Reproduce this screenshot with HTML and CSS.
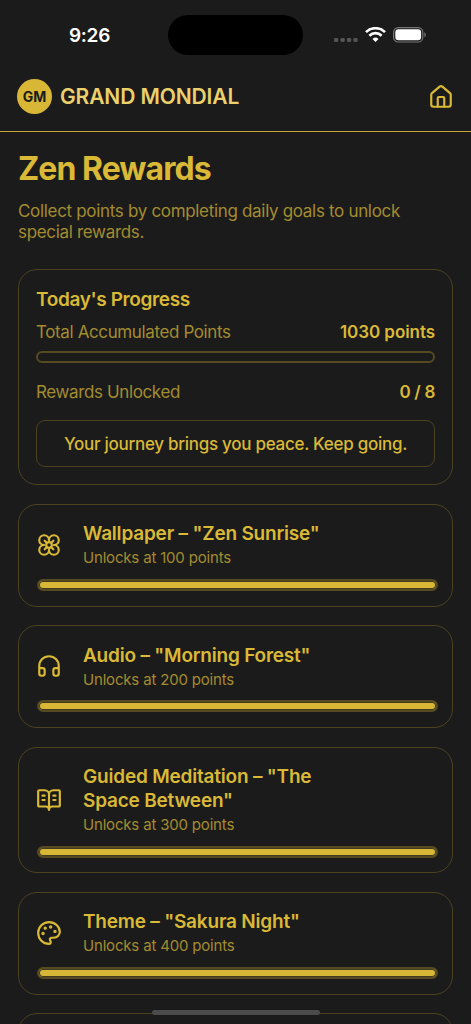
FILE: index.html
```html
<!DOCTYPE html>
<html lang="en">
<head>
<meta charset="utf-8">
<title>Zen Rewards</title>
<link rel="stylesheet" href="styles.css">
</head>
<body>
<div class="screen">
  <div class="status">
    <span class="time">9:26</span>
    <div class="island"></div>
    <div class="indicators">
      <svg class="cell" width="24" height="4" viewBox="0 0 24 4" fill="#555"><rect width="4.2" height="4" rx="1.3"/><rect x="6.5" width="4.2" height="4" rx="1.3"/><rect x="13" width="4.2" height="4" rx="1.3"/><rect x="19.4" width="4.2" height="4" rx="1.3"/></svg>
      <svg class="wifi" width="21" height="15" viewBox="0 0 21 15" fill="none" stroke="#fff" stroke-width="2.7"><path d="M1 5.1a13.6 13.6 0 0 1 19 0"/><path d="M4.4 8.7a8.7 8.7 0 0 1 12.2 0"/><path d="M10.5 14.9l-3-3a4.3 4.3 0 0 1 6 0z" fill="#fff" stroke="none"/></svg>
      <svg class="battery" width="34" height="16" viewBox="0 0 34 16"><rect x=".6" y=".6" width="29.2" height="14.4" rx="4.6" fill="none" stroke="#777" stroke-width="1.2"/><rect x="2.3" y="2.3" width="25.8" height="11" rx="3.2" fill="#fff"/><path d="M31.3 5.3c2 .8 2 4.2 0 5z" fill="#777"/></svg>
    </div>
  </div>
  <header class="header">
    <div class="logo"><span>GM</span></div>
    <div class="brand">GRAND MONDIAL</div>
    <svg class="icon home" viewBox="0 0 24 24"><path d="M15 21v-8a1 1 0 0 0-1-1h-4a1 1 0 0 0-1 1v8"/><path d="M3 10a2 2 0 0 1 .709-1.528l7-5.999a2 2 0 0 1 2.582 0l7 5.999A2 2 0 0 1 21 10v9a2 2 0 0 1-2 2H5a2 2 0 0 1-2-2z"/></svg>
  </header>
  <main class="content">
    <h1 class="title">Zen Rewards</h1>
    <p class="intro">Collect points by completing daily goals to unlock<br>special rewards.</p>
    <section class="card summary">
      <h2 class="heading">Today's Progress</h2>
      <div class="row"><span class="label">Total Accumulated Points</span><span class="value points">1030 points</span></div>
      <div class="track"></div>
      <div class="row unlocked"><span class="label">Rewards Unlocked</span><span class="value">0 / 8</span></div>
      <div class="quote"><span>Your journey brings you peace. Keep going.</span></div>
    </section>
    <section class="card reward">
      <div class="info">
        <svg class="icon" viewBox="0 0 24 24"><circle cx="12" cy="12" r="2.6"/><path d="M12 16.5A4.5 4.5 0 1 1 7.5 12 4.5 4.5 0 1 1 12 7.5a4.5 4.5 0 1 1 4.5 4.5 4.5 4.5 0 1 1-4.5 4.5"/><path d="m8 8 1.88 1.88M14.12 9.88 16 8M8 16l1.88-1.88M14.12 14.12 16 16"/></svg>
        <div><h3 class="name">Wallpaper – "Zen Sunrise"</h3><p class="cost">Unlocks at 100 points</p></div>
      </div>
      <div class="track full"></div>
    </section>
    <section class="card reward">
      <div class="info">
        <svg class="icon" viewBox="0 0 24 24"><path d="M3 14h3a2 2 0 0 1 2 2v3a2 2 0 0 1-2 2H5a2 2 0 0 1-2-2v-7a9 9 0 0 1 18 0v7a2 2 0 0 1-2 2h-1a2 2 0 0 1-2-2v-3a2 2 0 0 1 2-2h3"/></svg>
        <div><h3 class="name">Audio – "Morning Forest"</h3><p class="cost">Unlocks at 200 points</p></div>
      </div>
      <div class="track full"></div>
    </section>
    <section class="card reward tall">
      <div class="info">
        <svg class="icon" viewBox="0 0 24 24"><path d="M12 7v14"/><path d="M16 12h2M16 8h2M6 12h2M6 8h2"/><path d="M3 18a1 1 0 0 1-1-1V4a1 1 0 0 1 1-1h5a4 4 0 0 1 4 4 4 4 0 0 1 4-4h5a1 1 0 0 1 1 1v13a1 1 0 0 1-1 1h-6a3 3 0 0 0-3 3 3 3 0 0 0-3-3z"/></svg>
        <div><h3 class="name">Guided Meditation – "The<br>Space Between"</h3><p class="cost">Unlocks at 300 points</p></div>
      </div>
      <div class="track full"></div>
    </section>
    <section class="card reward">
      <div class="info">
        <svg class="icon" viewBox="0 0 24 24"><path d="M12 2C6.5 2 2 6.5 2 12s4.5 10 10 10c.926 0 1.648-.746 1.648-1.688 0-.437-.18-.835-.437-1.125-.29-.289-.438-.652-.438-1.125a1.64 1.64 0 0 1 1.668-1.668h1.996c3.051 0 5.555-2.503 5.555-5.554C21.965 6.012 17.461 2 12 2z"/><g stroke-width="1.4"><circle cx="13.5" cy="6.5" r=".9"/><circle cx="17.5" cy="10.5" r=".9"/><circle cx="8.5" cy="7.5" r=".9"/><circle cx="6.5" cy="12.5" r=".9"/></g></svg>
        <div><h3 class="name">Theme – "Sakura Night"</h3><p class="cost">Unlocks at 400 points</p></div>
      </div>
      <div class="track full"></div>
    </section>
    <section class="card reward"></section>
  </main>
  <div class="home-bar"></div>
</div>
</body>
</html>
```
FILE: styles.css
```css
* { box-sizing: border-box; margin: 0; padding: 0; }
body { background: #1b1b1b; font-family: Inter, sans-serif; color: #d9b936; }
.screen { position: relative; height: 1024px; overflow: hidden; }
.status { height: 70px; display: grid; grid-template-columns: 168px 135px 1fr; align-items: center; }
.time { padding-left: 69px; font-size: 19px; font-weight: 600; color: #fff; letter-spacing: -.3px; }
.island { height: 40px; border-radius: 20px; background: #000; }
.indicators { display: flex; align-items: center; padding-left: 31px; }
.cell { margin-top: 10px; }
.wifi { margin-left: 7px; margin-top: -1px; }
.battery { margin-left: 7px; }
.header { height: 62px; display: flex; align-items: center; padding: 0 17px 8px 17px; border-bottom: 1px solid #c5a936; }
.logo { width: 35px; height: 35px; border-radius: 50%; background: #d8b737; color: #1b1b1b; display: grid; place-items: center; font-size: 14px; font-weight: 700; }
.brand { margin-left: 8px; color: #ebd06b; font-size: 21px; font-weight: 600; letter-spacing: -.12px; }
.icon { width: 26px; height: 26px; flex: none; fill: none; stroke: #d9b936; stroke-width: 2; stroke-linecap: round; stroke-linejoin: round; }
.info .icon { margin-left: -.5px; }
.home { margin-left: auto; }
.content { padding: 18px 18px 0; }
.title { font-size: 32px; line-height: 38px; font-weight: 700; letter-spacing: -.95px; }
.intro { margin-top: 13px; font-size: 17px; line-height: 20.8px; color: #a38c30; letter-spacing: -.32px; }
.card { width: 435px; border: 1px solid #4b4220; border-radius: 19px; }
.summary { margin-top: 26.9px; height: 215.4px; padding: 17.2px 17px 0; }
.heading { font-size: 19px; line-height: 24px; font-weight: 600; letter-spacing: -.36px; }
.row { display: flex; justify-content: space-between; margin-top: 9px; font-size: 17px; line-height: 22px; }
.label { color: #a38c30; letter-spacing: -.38px; }
.value { font-weight: 600; letter-spacing: -.3px; }
.points { letter-spacing: -.06px; }
.track { height: 12px; margin-top: 8.5px; border: 2px solid #564a21; border-radius: 6px; }
.unlocked { margin-top: 18px; }
.quote { height: 47.5px; margin-top: 16.6px; border: 1px solid #4b4220; border-radius: 9px; display: grid; place-items: center; font-size: 17px; font-weight: 500; letter-spacing: -.28px; }
.reward { height: 102.8px; margin-top: 18.9px; padding: 17.3px 14px 0 17px; }
.tall { height: 125.7px; }
.info { display: flex; align-items: center; gap: 21.5px; }
.name { font-size: 19px; line-height: 23.4px; font-weight: 600; letter-spacing: -.2px; }
.cost { margin-top: 2.6px; font-size: 15px; line-height: 19px; color: #a38c30; letter-spacing: -.18px; }
.full { margin: 11.7px 0 0 1px; background: #d8b737; box-shadow: inset 0 0 0 1px #423a20; }
.home-bar { position: absolute; left: 152px; top: 1010px; width: 168px; height: 5px; border-radius: 3px; background: #4b4b4b; }
```
